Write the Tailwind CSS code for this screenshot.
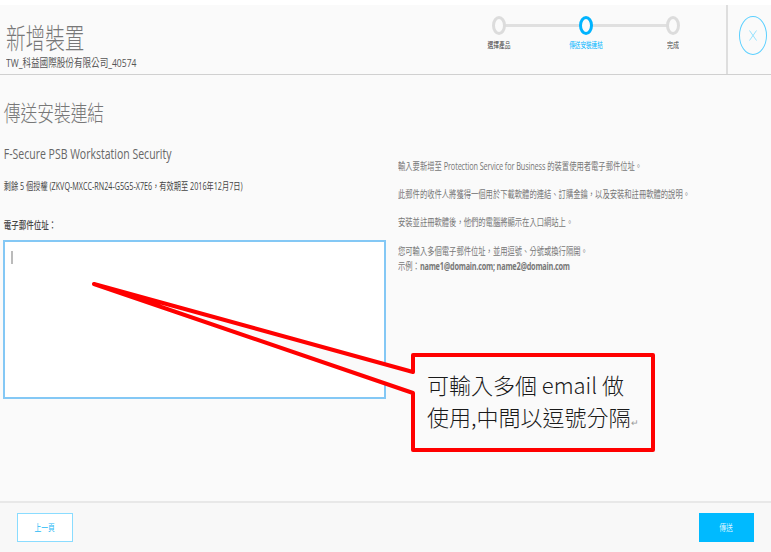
<!DOCTYPE html>
<html lang="zh-Hant">
<head>
    <meta charset="UTF-8">
    <title>新增裝置</title>
    <script src="https://cdn.jsdelivr.net/npm/@tailwindcss/browser@4"></script>
</head>
<body class="relative w-[771px] h-[552px] overflow-hidden bg-white font-['Open_Sans','Noto_Sans_CJK_TC',sans-serif] text-[#555]">
    <div class="flex flex-col h-[547px] mt-[5px] bg-[#fafafa]">

        <!-- Header -->
        <header class="flex h-[70px] shrink-0 border-b border-[#d0d0d0]">
            <div class="flex-1 pl-[6px] pt-[18px]">
                <h1 class="text-[28px] leading-[30px] font-light text-[#777] whitespace-nowrap origin-left scale-x-[0.7]">新增裝置</h1>
                <p class="text-[11px] leading-[14px] mt-[3px] text-[#555] whitespace-nowrap origin-left scale-x-[0.78]">TW_科益國際股份有限公司_40574</p>
            </div>
            <!-- Steps -->
            <div class="relative w-[240px] mt-[11px]">
                <div class="absolute left-[14px] top-[8px] w-[174px] h-[3px] bg-[#e0e0e0]"></div>
                <div class="absolute left-[6px] top-0 w-[14px] h-[19px] rounded-[50%] border-[3px] border-[#dcdcdc] bg-[#fafafa]"></div>
                <div class="absolute left-[93px] top-0 w-[14px] h-[19px] rounded-[50%] border-[3px] border-[#00b4ff] bg-[#fafafa]"></div>
                <div class="absolute left-[180px] top-0 w-[14px] h-[19px] rounded-[50%] border-[3px] border-[#dcdcdc] bg-[#fafafa]"></div>
                <span class="absolute left-[-12px] top-[24px] w-[50px] text-center text-[8px] leading-[10px] text-[#444] scale-x-[0.72]">選擇產品</span>
                <span class="absolute left-[75px] top-[24px] w-[50px] text-center text-[8px] leading-[10px] text-[#00b4ff] scale-x-[0.7]">傳送安裝連結</span>
                <span class="absolute left-[162px] top-[24px] w-[50px] text-center text-[8px] leading-[10px] text-[#444] scale-x-[0.75]">完成</span>
            </div>
            <div class="flex items-start w-[45px] border-l-2 border-[#dedede] pl-[11px] pt-[11px]">
                <div class="flex items-center justify-center w-[28px] h-[39px] shrink-0 rounded-[50%] border border-[#5cd0ff]">
                    <svg width="8" height="11" viewBox="0 0 8 11" fill="none" stroke="#7fdcff" stroke-width="0.8"><path d="M0.5 0.5L7.5 10.5M7.5 0.5L0.5 10.5"/></svg>
                </div>
            </div>
        </header>

        <!-- Body -->
        <main class="flex-1 pl-[3px] pt-[20px]">
            <h2 class="pl-[1px] text-[22px] leading-[34px] font-light text-[#777] whitespace-nowrap origin-left scale-x-[0.76]">傳送安裝連結</h2>
            <div class="flex mt-[16px]">
                <div class="w-[383px] shrink-0">
                    <h3 class="pl-[1px] text-[14px] leading-[18px] text-[#666] whitespace-nowrap origin-left scale-x-[0.75]">F-Secure PSB Workstation Security</h3>
                    <p class="pl-[1px] mt-[16px] text-[10px] leading-[14px] text-[#444] whitespace-nowrap origin-left scale-x-[0.72]">剩餘 5 個授權 (ZKVQ-MXCC-RN24-G5G5-X7E6，有效期至 2016年12月7日)</p>
                    <label class="block pl-[1px] mt-[25px] text-[10px] leading-[14px] font-medium text-[#444] whitespace-nowrap origin-left scale-x-[0.75]">電子郵件位址：</label>
                    <div class="mt-[8px] h-[159px] border-2 border-[#84c8f5] bg-white pl-[6px] pt-[9px]">
                        <div class="w-[2px] h-[13px] bg-[#bbb]"></div>
                    </div>
                </div>
                <div class="pl-[12px] pt-[15px] text-[10px] leading-[12px] text-[#777] whitespace-nowrap">
                    <p class="origin-left scale-x-[0.73]">輸入要新增至 <span class="tracking-[-0.15px]">Protection Service for Business</span> 的裝置使用者電子郵件位址。</p>
                    <p class="mt-[16px] origin-left scale-x-[0.73]">此郵件的收件人將獲得一個用於下載軟體的連結、訂購金鑰，以及安裝和註冊軟體的說明。</p>
                    <p class="mt-[16px] origin-left scale-x-[0.73]">安裝並註冊軟體後，他們的電腦將顯示在入口網站上。</p>
                    <p class="mt-[17px] origin-left scale-x-[0.73]">您可輸入多個電子郵件位址，並用逗號、分號或換行隔開。</p>
                    <p class="mt-[3px] origin-left scale-x-[0.73]">示例：<b class="font-bold tracking-[-0.3px]">name1@domain.com; name2@domain.com</b></p>
                </div>
            </div>
        </main>

        <!-- Footer -->
        <footer class="flex items-center justify-between h-[51px] shrink-0 border-t-2 border-[#e8e8e8] bg-[#f8f8f8] px-[17px]">
            <button class="w-[56px] h-[29px] border-[1.5px] border-[#8adcff] bg-white text-[9px] text-[#1cb8f5]"><span class="inline-block scale-x-[0.75]">上一頁</span></button>
            <button class="w-[55px] h-[29px] bg-[#00baff] text-[9px] text-[#d8f4ff]"><span class="inline-block scale-x-[0.75]">傳送</span></button>
        </footer>
    </div>

    <!-- Callout annotation over the page -->
    <svg class="absolute left-0 top-0 pointer-events-none" width="771" height="552" viewBox="0 0 771 552" fill="none">
        <path d="M94 284L413 372L413 355H653V450H413V393Z" fill="#fafafa" stroke="#ff0000" stroke-width="4" stroke-linejoin="round"/>
    </svg>
    <div class="absolute left-[427px] top-[368px] w-[224px] font-['Noto_Sans_CJK_TC',sans-serif] text-[22px] font-light leading-[32px] text-[#1a1a1a]">
        <p>可輸入多個 email 做</p>
        <p>使用,中間以逗號分隔<span class="text-[9px] text-[#999]">↵</span></p>
    </div>
</body>
</html>
